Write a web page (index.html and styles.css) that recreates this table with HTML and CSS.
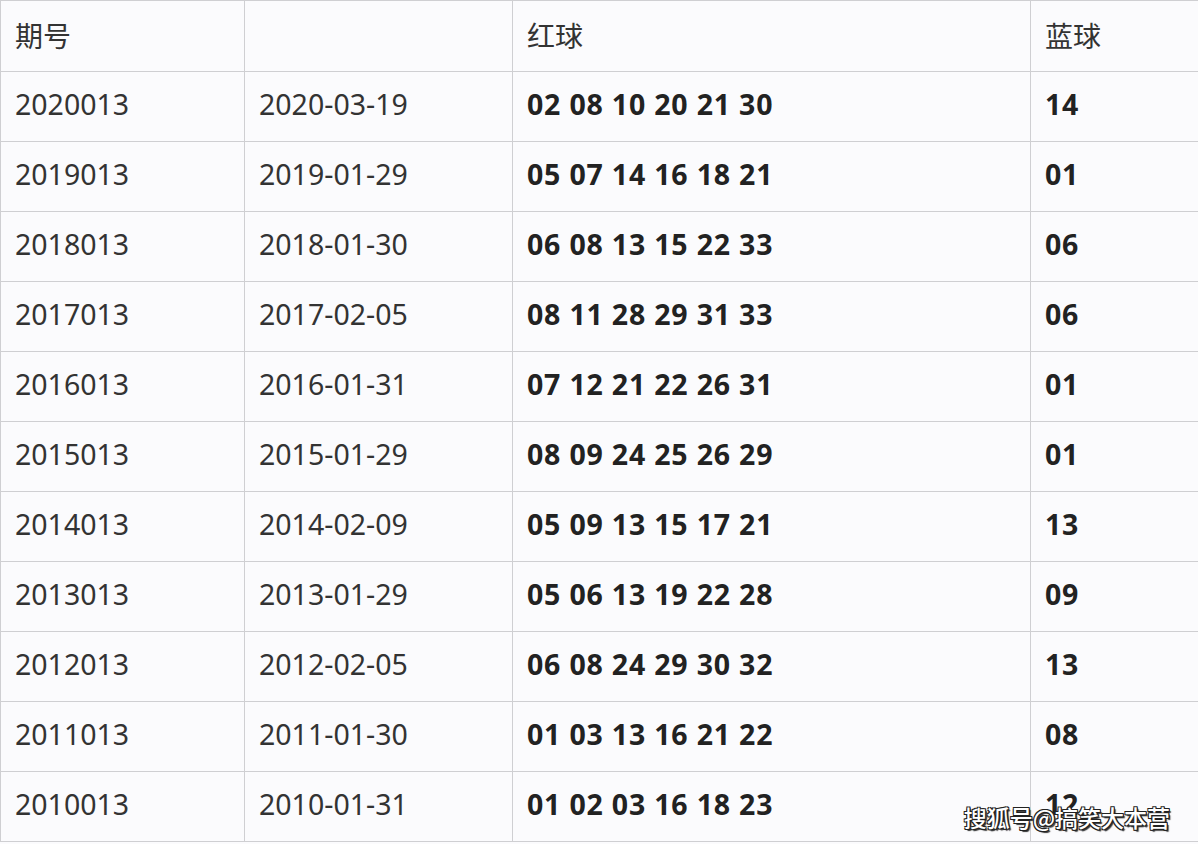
FILE: index.html
```html
<!DOCTYPE html>
<html lang="zh">
<head>
<meta charset="utf-8">
<link rel="stylesheet" href="styles.css">
</head>
<body>
<div class="page">
<table class="draw">
  <colgroup>
    <col class="c1"><col class="c2"><col class="c3"><col class="c4">
  </colgroup>
  <thead>
    <tr><th>期号</th><th></th><th>红球</th><th>蓝球</th></tr>
  </thead>
  <tbody>
    <tr><td>2020013</td><td>2020-03-19</td><td class="b">02 08 10 20 21 30</td><td class="b">14</td></tr>
    <tr><td>2019013</td><td>2019-01-29</td><td class="b">05 07 14 16 18 21</td><td class="b">01</td></tr>
    <tr><td>2018013</td><td>2018-01-30</td><td class="b">06 08 13 15 22 33</td><td class="b">06</td></tr>
    <tr><td>2017013</td><td>2017-02-05</td><td class="b">08 11 28 29 31 33</td><td class="b">06</td></tr>
    <tr><td>2016013</td><td>2016-01-31</td><td class="b">07 12 21 22 26 31</td><td class="b">01</td></tr>
    <tr><td>2015013</td><td>2015-01-29</td><td class="b">08 09 24 25 26 29</td><td class="b">01</td></tr>
    <tr><td>2014013</td><td>2014-02-09</td><td class="b">05 09 13 15 17 21</td><td class="b">13</td></tr>
    <tr><td>2013013</td><td>2013-01-29</td><td class="b">05 06 13 19 22 28</td><td class="b">09</td></tr>
    <tr><td>2012013</td><td>2012-02-05</td><td class="b">06 08 24 29 30 32</td><td class="b">13</td></tr>
    <tr><td>2011013</td><td>2011-01-30</td><td class="b">01 03 13 16 21 22</td><td class="b">08</td></tr>
    <tr><td>2010013</td><td>2010-01-31</td><td class="b">01 02 03 16 18 23</td><td class="b">12</td></tr>
  </tbody>
</table>
<div class="mark">搜狐号@搞笑大本营</div>
</div>
</body>
</html>
```
FILE: styles.css
```css
html, body {
  margin: 0;
  padding: 0;
  background: #fbfbfd;
}
.page {
  position: relative;
  width: 1198px;
  height: 844px;
  overflow: hidden;
}
.draw {
  border-collapse: collapse;
  table-layout: fixed;
  width: 1199px;
  font-family: "Noto Sans", "Noto Sans CJK SC", sans-serif;
  font-size: 28.5px;
  color: #333;
}
.c1 { width: 244px; }
.c2 { width: 268px; }
.c3 { width: 518px; }
.c4 { width: 169px; }
.draw th, .draw td {
  border: 1px solid #cfcfd2;
  height: 65px;
  padding: 0 0 4px 14px;
  text-align: left;
  vertical-align: middle;
  font-weight: 400;
  line-height: 1;
  white-space: nowrap;
}
.draw th {
  font-size: 28px;
  height: 70px;
  padding-bottom: 0;
}
.draw td.b {
  font-weight: 700;
  color: #222;
  letter-spacing: 0.8px;
}
.mark {
  position: absolute;
  right: 28px;
  bottom: 10px;
  font-family: "Noto Sans CJK SC", sans-serif;
  font-size: 23px;
  font-weight: 500;
  color: #fff;
  text-shadow: 1px 1px 0 #222, -1px -1px 0 #222, 1px -1px 0 #222, -1px 1px 0 #222, 0 1px 0 #222, 1px 0 0 #222, 2px 2px 1px #333;
}
```
